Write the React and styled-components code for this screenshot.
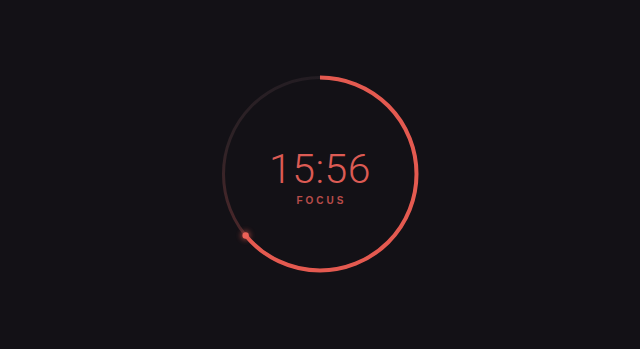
import React from "react";
import styled, { createGlobalStyle } from "styled-components";

const GlobalStyle = createGlobalStyle`
  html, body {
    margin: 0;
    padding: 0;
    background: #131116;
  }
`;

const SIZE = 200;
const R = 96.5;
const C = 2 * Math.PI * R;
const PROGRESS = 0.64;

const Timer = () => {
  const angle = PROGRESS * 2 * Math.PI;
  const dotX = SIZE / 2 + R * Math.sin(angle);
  const dotY = SIZE / 2 - R * Math.cos(angle);
  return (
    <Page>
      <GlobalStyle />
      <Dial>
        <Ring viewBox={`0 0 ${SIZE} ${SIZE}`} width={SIZE} height={SIZE}>
          <defs>
            <linearGradient id="track" x1="0" y1="1" x2="0.6" y2="0">
              <stop offset="0" stopColor="#5a2a2c" />
              <stop offset="0.5" stopColor="#2e2226" />
              <stop offset="1" stopColor="#221c22" />
            </linearGradient>
            <filter id="glow" x="-50%" y="-50%" width="200%" height="200%">
              <feGaussianBlur stdDeviation="2.5" />
            </filter>
          </defs>
          <circle
            cx={SIZE / 2}
            cy={SIZE / 2}
            r={R}
            fill="none"
            stroke="url(#track)"
            strokeWidth="3"
          />
          <circle
            cx={SIZE / 2}
            cy={SIZE / 2}
            r={R}
            fill="none"
            stroke="#e45a50"
            strokeWidth="4"
            strokeDasharray={`${C * PROGRESS} ${C}`}
            transform={`rotate(-90 ${SIZE / 2} ${SIZE / 2})`}
          />
          <circle cx={dotX} cy={dotY} r="5" fill="#e45a50" opacity="0.5" filter="url(#glow)" />
          <circle cx={dotX} cy={dotY} r="3.2" fill="#ec6258" />
        </Ring>
        <Readout>
          <Time>15:56</Time>
          <Label>FOCUS</Label>
        </Readout>
      </Dial>
    </Page>
  );
};

export default Timer;

const Page = styled.div`
  width: 640px;
  height: 349px;
  display: flex;
  align-items: center;
  justify-content: center;
  background: #131116;
  overflow: hidden;
`;

const Dial = styled.div`
  position: relative;
  width: 200px;
  height: 200px;
  margin-top: -1px;
  display: flex;
  align-items: center;
  justify-content: center;
`;

const Ring = styled.svg`
  position: absolute;
  inset: 0;
`;

const Readout = styled.div`
  display: flex;
  flex-direction: column;
  align-items: center;
  margin-top: 6px;
`;

const Time = styled.div`
  font-family: "Roboto", "Liberation Sans", sans-serif;
  font-weight: 300;
  font-size: 41px;
  line-height: 1;
  color: #dc5b54;
  letter-spacing: 0.5px;
`;

const Label = styled.div`
  font-family: "Liberation Sans", Arial, sans-serif;
  font-weight: 700;
  font-size: 10px;
  letter-spacing: 3px;
  margin-top: 5px;
  margin-right: -3px;
  color: #b84c4a;
`;
